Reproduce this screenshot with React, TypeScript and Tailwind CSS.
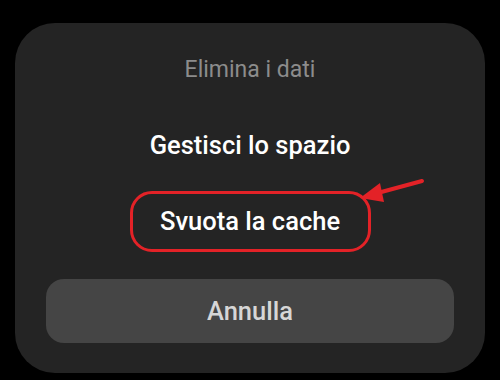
import React from "react";

const ArrowMark: React.FC = () => (
  <svg
    className="absolute left-[350px] top-[170px]"
    width="90"
    height="40"
    viewBox="0 0 90 40"
  >
    <line x1="72" y1="11" x2="24" y2="24" stroke="#e32227" strokeWidth="4" strokeLinecap="round" />
    <polygon points="10,28 30,13 34,32" fill="#e32227" />
  </svg>
);

export default function App() {
  return (
    <div
      className="relative h-[380px] w-[500px] bg-black px-[15px] pt-[23px]"
      style={{ fontFamily: "Roboto, 'Noto Sans', sans-serif" }}
    >
      <div className="flex h-[350px] flex-col items-center rounded-[40px] bg-[#242424] px-[31px] pt-[33px]">
        <div className="text-[23px] leading-[28px] text-[#8c8c8c]">Elimina i dati</div>
        <div className="mt-[46px] text-[25.5px] font-medium leading-[30px] text-white">
          Gestisci lo spazio
        </div>
        <div className="mt-[31px] flex h-[61px] w-[241px] items-center justify-center rounded-[22px] border-[3px] border-[#e32227] text-[25.5px] font-medium text-white">
          Svuota la cache
        </div>
        <button className="mt-[27px] flex h-[64px] w-full items-center justify-center rounded-[18px] bg-[#454545] text-[25.5px] font-medium text-[#d6d6d6]">
          Annulla
        </button>
      </div>
      <ArrowMark />
    </div>
  );
}
